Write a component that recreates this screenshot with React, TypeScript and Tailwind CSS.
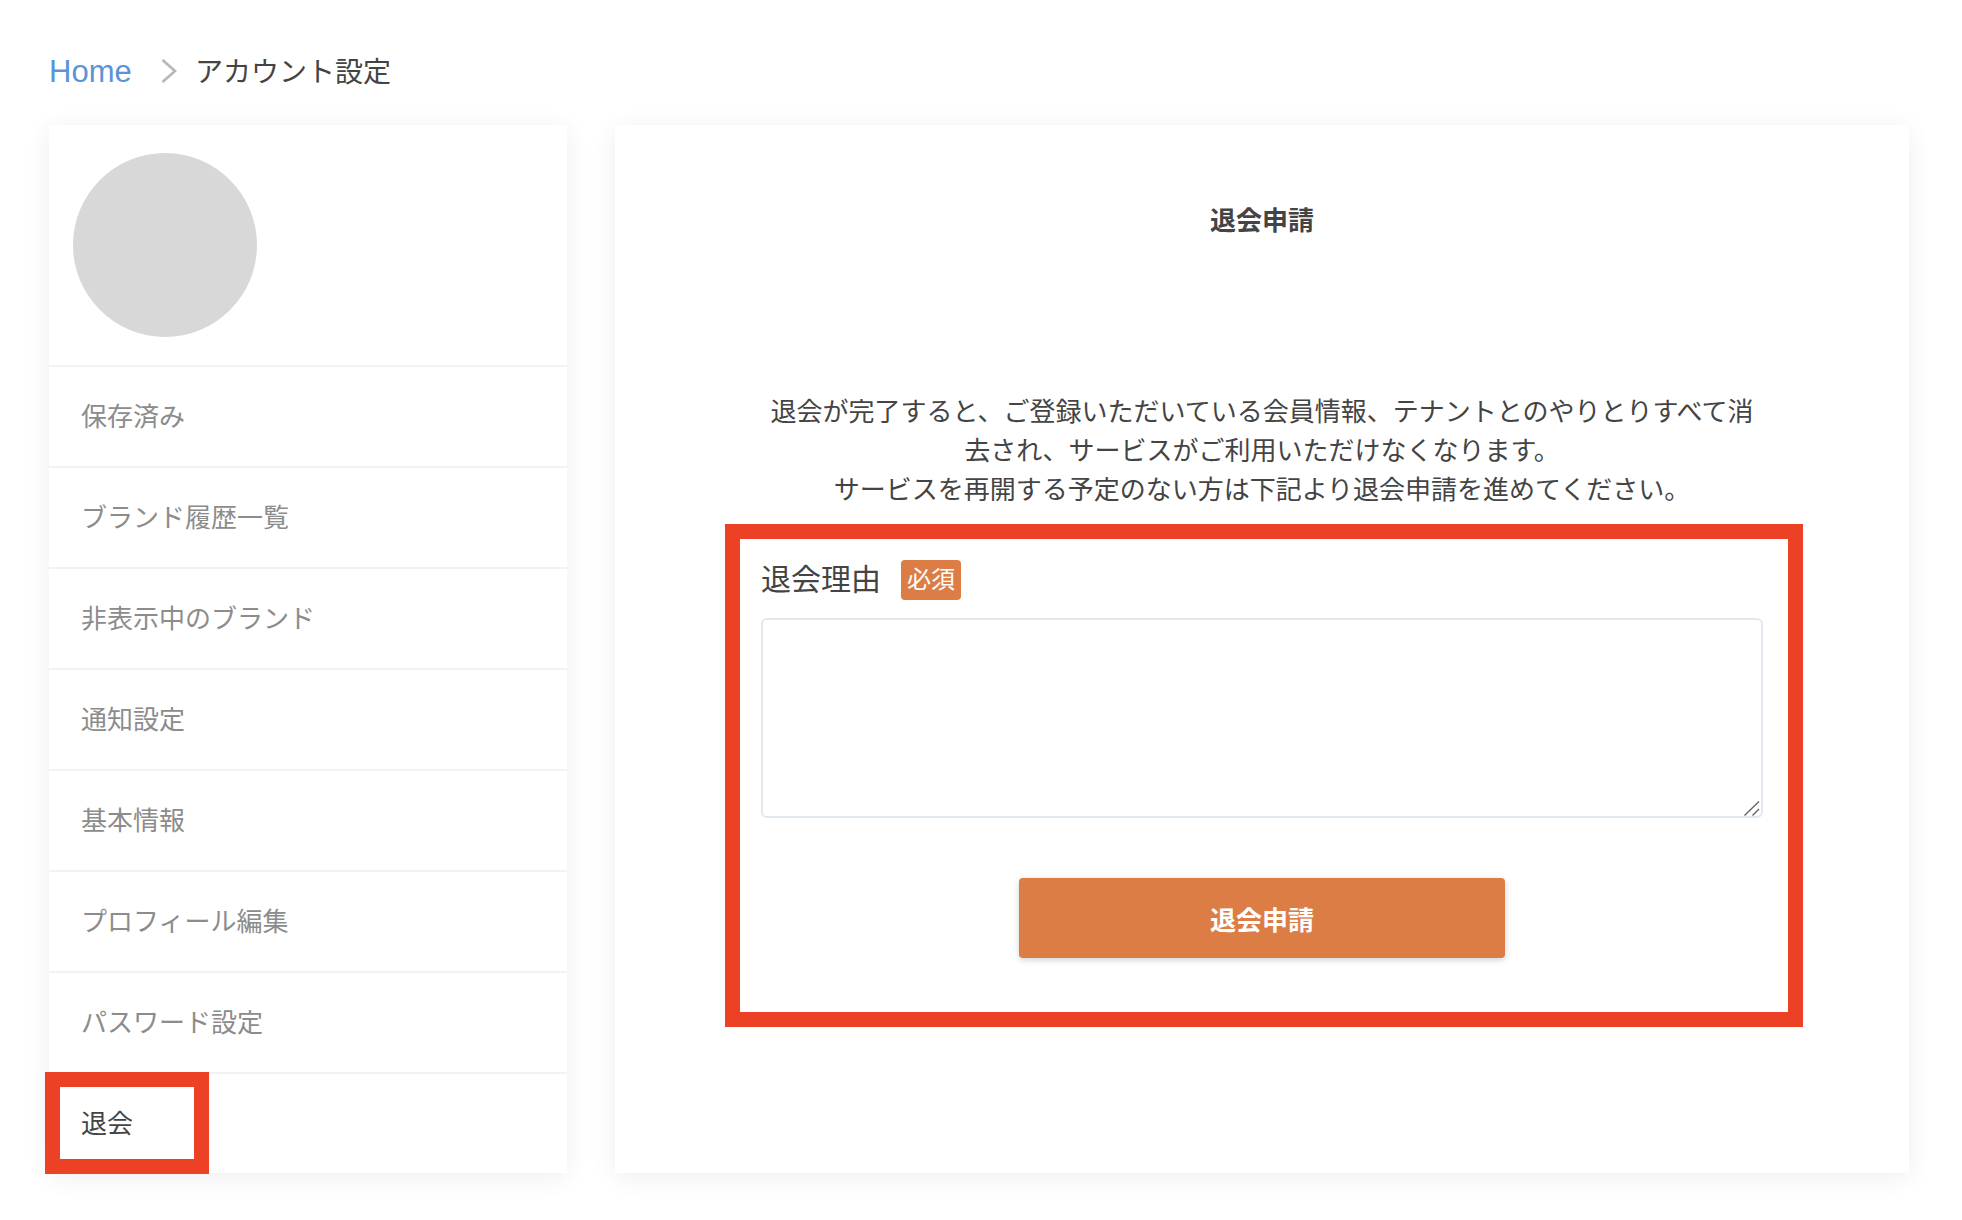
const navItems = ['保存済み', 'ブランド履歴一覧', '非表示中のブランド', '通知設定', '基本情報', 'プロフィール編集', 'パスワード設定'];

const cardShadow = 'shadow-[0_4px_24px_rgba(0,0,0,0.07)]';

function Sidebar() {
	return (
		<aside className={`w-[518px] h-[1048px] shrink-0 flex flex-col bg-white ${cardShadow}`}>
			<div className="h-[240px] shrink-0 pt-[28px] pl-[24px]">
				<div className="h-[184px] w-[184px] rounded-full bg-[#d8d8d8]" />
			</div>
			{navItems.map((item) => (
				<div key={item} className="h-[101px] shrink-0 flex items-center border-t-2 border-[#f2f2f2] pl-[32px] pt-[2px] text-[26px] text-[#8c8c8c]">
					{item}
				</div>
			))}
			<div className="relative flex-1 flex items-center border-t-2 border-[#f2f2f2] pl-[32px] pt-[2px] text-[26px] text-[#444444]">
				退会
				<div className="absolute left-[-4px] top-[-2px] h-[102px] w-[164px] border-[15px] border-[#ec4125]" />
			</div>
		</aside>
	);
}

function WithdrawForm() {
	return (
		<div className="relative mt-[51px] w-[1002px]">
			<div className="flex items-center gap-[20px]">
				<span className="text-[30px] leading-[40px] text-[#444444]">退会理由</span>
				<span className="h-[40px] w-[60px] flex items-center justify-center rounded-[4px] bg-[#dc7d46] text-[24px] text-white">必須</span>
			</div>
			<div className="relative mt-[18px]">
				<textarea className="block w-full h-[200px] resize-none rounded-md border-2 border-[#e2e8f0] bg-white outline-none" />
				<svg className="absolute right-[3px] bottom-[2px]" width="16" height="15" viewBox="0 0 16 15" fill="none" stroke="#666666" strokeWidth="1.4">
					<path d="M0.5 14.5L15 0.5" />
					<path d="M8.5 14.5L15 8" />
				</svg>
			</div>
			<button className="mt-[60px] mx-auto block w-[486px] h-[80px] pt-[6px] rounded-[4px] bg-[#dc7d46] text-[26px] font-bold text-white shadow-[0_2px_6px_rgba(0,0,0,0.18)]">
				退会申請
			</button>
			<div className="pointer-events-none absolute left-[-36px] right-[-40px] top-[-36px] bottom-[-69px] border-[15px] border-[#ec4125]" />
		</div>
	);
}

export default function App() {
	return (
		<div className="min-h-[1220px] bg-white pl-[49px] pr-[53px] font-['Liberation_Sans','Noto_Sans_CJK_JP',sans-serif]">
			<nav className="h-[125px] pt-[51px] flex items-start">
				<div className="flex items-center h-[40px]">
					<span className="pt-[2px] text-[31px] text-[#5b93db] w-[112px]">Home</span>
					<svg width="16" height="24" viewBox="0 0 16 24" fill="none" stroke="#b8b8b8" strokeWidth="2.8">
						<path d="M1.5 1l12.5 11L1.5 23" />
					</svg>
					<span className="ml-[18px] pt-[3px] text-[28px] text-[#444444]">アカウント設定</span>
				</div>
			</nav>
			<div className="flex gap-[48px]">
				<Sidebar />
				<main className={`flex-1 h-[1048px] flex flex-col items-center bg-white pt-[77px] text-[#444444] ${cardShadow}`}>
					<h1 className="text-[26px] leading-[39px] font-bold">退会申請</h1>
					<p className="mt-[152px] w-[1000px] text-center text-[26px] leading-[38.8px]">
						退会が完了すると、ご登録いただいている会員情報、テナントとのやりとりすべて消去され、サービスがご利用いただけなくなります。
						<br />
						サービスを再開する予定のない方は下記より退会申請を進めてください。
					</p>
					<WithdrawForm />
				</main>
			</div>
		</div>
	);
}
